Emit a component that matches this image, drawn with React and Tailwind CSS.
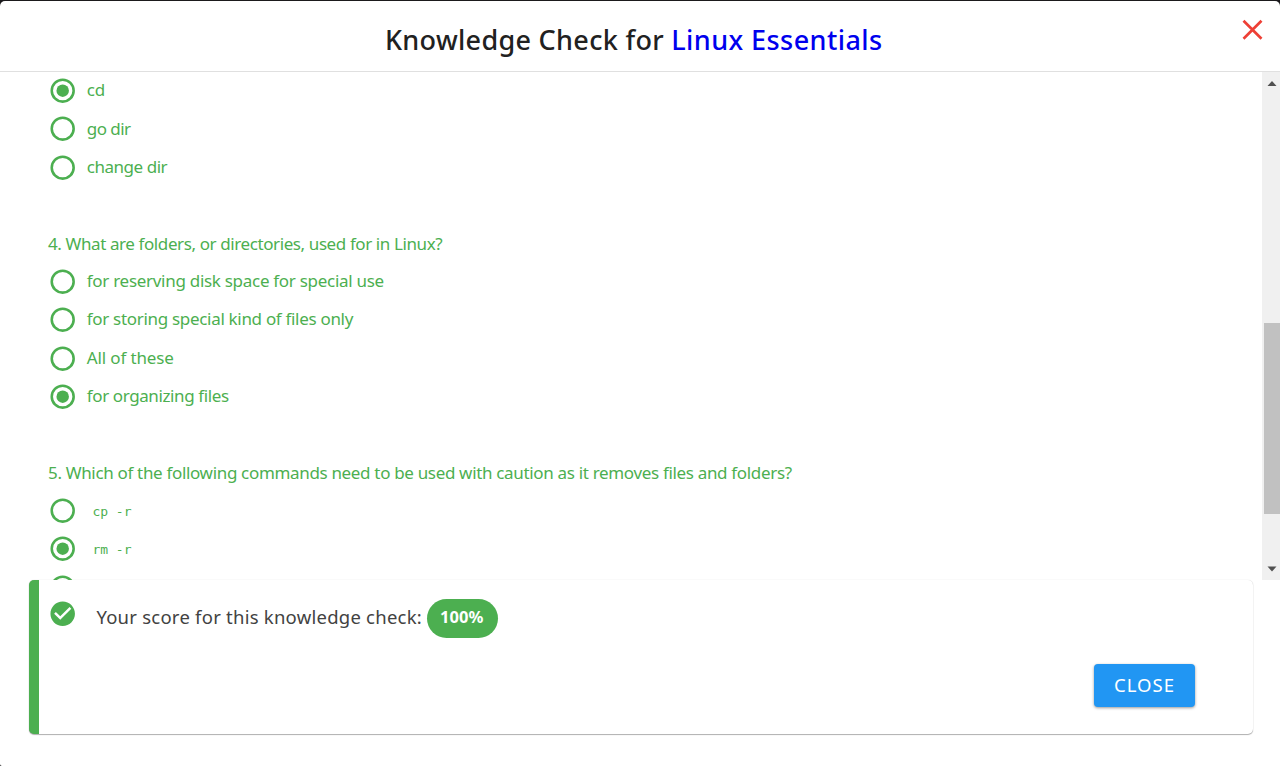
import React from "react";

function Radio({ checked }) {
  return (
    <svg viewBox="0 0 24 24" className="h-[29.4px] w-[29.4px] shrink-0">
      <circle cx="12" cy="12" r="8.950" fill="none" stroke="#4caf50" strokeWidth="2.100" />
      {checked && <circle cx="12" cy="12" r="5.100" fill="#4caf50" />}
    </svg>
  );
}

function Option({ label, checked, code, className = "" }) {
  return (
    <li className="flex h-[38.5px] items-center">
      <Radio checked={checked} />
      {label && code && (
        <code className="ml-[15px] whitespace-pre pt-0.5 font-['DejaVu_Sans_Mono',monospace] text-[13px] leading-5">{label}</code>
      )}
      {label && !code && (
        <span className={"ml-[9.4px] whitespace-nowrap pb-px text-[17px] leading-6 " + className}>{label}</span>
      )}
    </li>
  );
}

function Question({ children, className = "" }) {
  return (
    <h2 className={"flex h-[75.2px] items-end whitespace-nowrap pb-[6px] text-[17px] leading-6 " + className}>
      {children}
    </h2>
  );
}

export default function App() {
  return (
    <div className="h-[766px] w-[1280px] overflow-hidden bg-[#1b1a1c] pt-px font-['Noto_Sans',sans-serif]">
      <div className="flex h-[765px] flex-col overflow-hidden rounded-t-[5px] rounded-bl-[2px] bg-white">
        <header className="flex h-[71px] shrink-0 items-start border-b border-[#e0e0e0]">
          <h1 className="ml-[385px] mt-[19px] w-[839px] whitespace-nowrap text-[27px] font-medium leading-10 text-[#212121]">
            <span className="tracking-[0.31px]">Knowledge Check for </span>
            <span className="tracking-[0.43px] text-[#0000ee]">Linux Essentials</span>
          </h1>
          <button aria-label="Close" className="ml-[18px] mt-[18px]">
            <svg viewBox="0 0 21 21" className="h-[21px] w-[21px]" fill="none" stroke="#ee4036" strokeWidth="2.7">
              <path d="M1.500 1.800 19.500 19.800M19.500 1.800 1.500 19.800" />
            </svg>
          </button>
        </header>

        <main className="flex h-[508px] shrink-0 overflow-hidden">
          <div className="-mt-[0.6px] w-[1262px] pl-[48px] text-[#4caf50]">
            <ul>
              <Option label="cd" checked className="tracking-[-0.3px]" />
              <Option label="go dir" className="tracking-[-0.55px]" />
              <Option label="change dir" className="tracking-[-0.47px]" />
            </ul>
            <Question className="tracking-[-0.4px]">4. What are folders, or directories, used for in Linux?</Question>
            <ul>
              <Option label="for reserving disk space for special use" className="tracking-[-0.29px]" />
              <Option label="for storing special kind of files only" className="tracking-[-0.31px]" />
              <Option label="All of these" className="tracking-[-0.14px]" />
              <Option label="for organizing files" checked className="tracking-[-0.39px]" />
            </ul>
            <Question className="tracking-[-0.33px]">5. Which of the following commands need to be used with caution as it removes files and folders?</Question>
            <ul>
              <Option label="cp -r" code />
              <Option label="rm -r" code checked />
              <Option />
            </ul>
          </div>
          <div className="flex w-[18px] flex-col items-end bg-[#f0f0f0]">
            <svg viewBox="0 0 16 20" className="h-[20px] w-[16px] fill-[#505050]">
              <path d="M3.5 14 8 9l4.5 5z" />
            </svg>
            <div className="mt-[231px] h-[191px] w-[16px] bg-[#c1c1c1]" />
            <svg viewBox="0 0 16 20" className="mt-[46px] h-[20px] w-[16px] fill-[#505050]">
              <path d="M3.5 6.500 8 11.500l4.500-5z" />
            </svg>
          </div>
        </main>

        <section className="ml-[29px] h-[154px] w-[1224px] shrink-0 rounded-[5px] border-l-[10px] border-[#4caf50] bg-white shadow-[0_1px_1px_rgba(0,0,0,0.3),0_0_1px_rgba(0,0,0,0.2)]">
          <div className="flex h-[76px] items-center pl-[9px]">
            <svg viewBox="0 0 24 24" className="mb-[9px] h-[29.4px] w-[29.4px] fill-[#4caf50]">
              <path d="M12 2C6.48 2 2 6.48 2 12s4.48 10 10 10 10-4.48 10-10S17.52 2 12 2zm-2 15l-5-5 1.410-1.410L10 14.170l7.590-7.590L19 8l-9 9z" />
            </svg>
            <p className="ml-[19px] w-[330.300px] whitespace-nowrap pb-[3px] text-[18.5px] leading-7 tracking-[0.24px] text-[#424242]">Your score for this knowledge check:</p>
            <span className="mt-px flex h-[38.5px] w-[71px] items-center justify-center rounded-full bg-[#4caf50] pb-[2px] pr-px text-[16.5px] font-bold text-white">100%</span>
          </div>
          <div className="flex justify-end pr-[58px] pt-2">
            <button className="flex h-[43px] w-[101px] items-center justify-center rounded-[4px] bg-[#2196f3] pb-[2px] text-[18.5px] tracking-[1px] text-white shadow-[0_1px_3px_rgba(0,0,0,0.4)]">CLOSE</button>
          </div>
        </section>
      </div>
    </div>
  );
}
